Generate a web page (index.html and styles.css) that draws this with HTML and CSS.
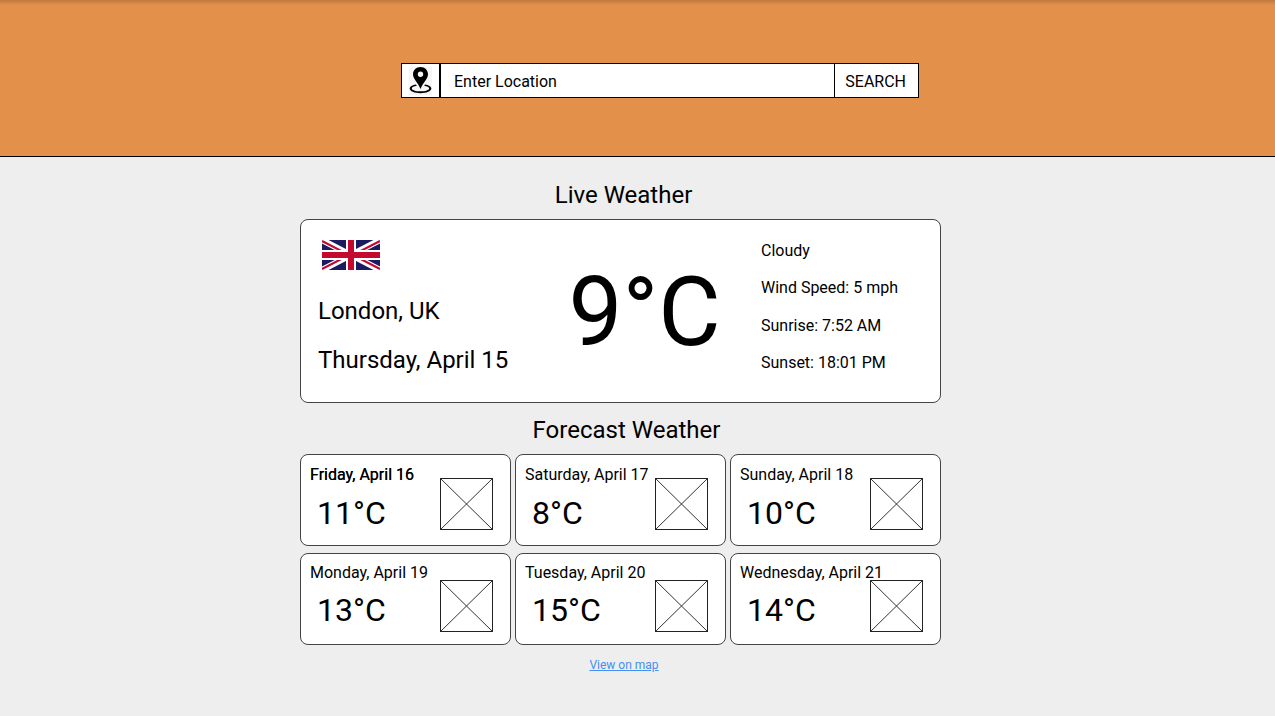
FILE: index.html
```html
<!DOCTYPE html>
<html lang="en">
<head>
<meta charset="utf-8">
<meta name="viewport" content="width=device-width, initial-scale=1">
<title>Weather</title>
<link rel="stylesheet" href="styles.css">
</head>
<body>
<header class="header">
  <form class="search" role="search">
    <label class="search-pin" for="location" aria-label="Location">
      <svg class="pin" viewBox="0 0 23 28" aria-hidden="true">
        <path d="M0 0H23V28H0Z" fill="#f6f6f6"/>
        <path d="M7 17.500C3.500 18 .7 19.600.7 21.600c0 2.700 4.800 4.700 10.800 4.700s10.800-2 10.800-4.700c0-2-2.800-3.600-6.300-4.100l-.8 1.200c2.900.4 5 1.500 5 2.700 0 1.600-3.900 2.900-8.700 2.900s-8.700-1.300-8.700-2.900c0-1.200 2.100-2.300 5-2.700Z"/>
        <path fill-rule="evenodd" d="M11.500 0C7.200 0 4 3.200 4 7.200c0 5 5 8 7.500 14.800 2.500-6.800 7.500-9.800 7.500-14.800C19 3.200 15.800 0 11.500 0Zm0 4.500a2.700 2.700 0 1 1 0 5.400 2.700 2.700 0 0 1 0-5.400Z"/>
      </svg>
    </label>
    <input class="search-input" id="location" type="text" placeholder="Enter Location">
    <button class="search-button" type="submit">SEARCH</button>
  </form>
</header>
<main class="main">
  <h1 class="heading heading-live">Live Weather</h1>
  <section class="card live">
    <div class="place">
      <svg class="flag" viewBox="0 0 58 30" preserveAspectRatio="none" role="img" aria-label="United Kingdom">
        <path d="M0 0H58V30H0Z" fill="#1b1b61"/>
        <path d="M0 0L58 30M58 0L0 30" stroke="#fff" stroke-width="6"/>
        <path d="M0 1L29 16M58 29L29 14M58 1L29 16M0 29L29 14" stroke="#c3092f" stroke-width="2"/>
        <path d="M29 0V30M0 15H58" stroke="#fff" stroke-width="10"/>
        <path d="M29 0V30M0 15H58" stroke="#c3092f" stroke-width="6"/>
      </svg>
      <p class="place-line">London, UK</p>
      <p class="place-line">Thursday, April 15</p>
    </div>
    <p class="now">9°C</p>
    <ul class="details">
      <li>Cloudy</li>
      <li>Wind Speed: 5 mph</li>
      <li>Sunrise: 7:52 AM</li>
      <li>Sunset: 18:01 PM</li>
    </ul>
  </section>
  <h2 class="heading heading-forecast">Forecast Weather</h2>
  <section class="forecast">
    <article class="card day">
      <h3 class="date date-next">Friday, April 16</h3>
      <p class="temp">11°C</p>
      <svg class="picture" viewBox="0 0 53 52" aria-hidden="true"><path class="diagonals" d="M0 0L53 52M53 0L0 52"/><path class="frame" d="M.5 .5H52.500V51.500H.5Z"/></svg>
    </article>
    <article class="card day">
      <h3 class="date">Saturday, April 17</h3>
      <p class="temp">8°C</p>
      <svg class="picture" viewBox="0 0 53 52" aria-hidden="true"><path class="diagonals" d="M0 0L53 52M53 0L0 52"/><path class="frame" d="M.5 .5H52.500V51.500H.5Z"/></svg>
    </article>
    <article class="card day">
      <h3 class="date">Sunday, April 18</h3>
      <p class="temp">10°C</p>
      <svg class="picture" viewBox="0 0 53 52" aria-hidden="true"><path class="diagonals" d="M0 0L53 52M53 0L0 52"/><path class="frame" d="M.5 .5H52.500V51.500H.5Z"/></svg>
    </article>
    <article class="card day day-late">
      <h3 class="date">Monday, April 19</h3>
      <p class="temp">13°C</p>
      <svg class="picture" viewBox="0 0 53 52" aria-hidden="true"><path class="diagonals" d="M0 0L53 52M53 0L0 52"/><path class="frame" d="M.5 .5H52.500V51.500H.5Z"/></svg>
    </article>
    <article class="card day day-late">
      <h3 class="date">Tuesday, April 20</h3>
      <p class="temp">15°C</p>
      <svg class="picture" viewBox="0 0 53 52" aria-hidden="true"><path class="diagonals" d="M0 0L53 52M53 0L0 52"/><path class="frame" d="M.5 .5H52.500V51.500H.5Z"/></svg>
    </article>
    <article class="card day day-late">
      <h3 class="date">Wednesday, April 21</h3>
      <p class="temp">14°C</p>
      <svg class="picture" viewBox="0 0 53 52" aria-hidden="true"><path class="diagonals" d="M0 0L53 52M53 0L0 52"/><path class="frame" d="M.5 .5H52.500V51.500H.5Z"/></svg>
    </article>
  </section>
  <a class="map-link" href="#map">View on map</a>
</main>
</body>
</html>
```
FILE: styles.css
```css
* {
  box-sizing: border-box;
}

body {
  margin: 0;
  background: #eee;
  color: #000;
  font-family: Roboto, "Liberation Sans", sans-serif;
  font-size: 16px;
  line-height: 20px;
}

h1, h2, h3, p, ul {
  margin: 0;
  padding: 0;
  font-weight: 400;
}

/* Header and search */
.header {
  display: flex;
  justify-content: center;
  padding: 63px 0 58px 45px;
  border-bottom: 1px solid #000;
  background: linear-gradient(#c07a3e, #e2904a 5px);
}

.search {
  display: flex;
  width: 100%;
  max-width: 518px;
  border: 1px solid #000;
  background: #fff;
}

.search-pin {
  display: flex;
  align-items: center;
  padding: 0 7px;
}

.pin {
  width: 23px;
  height: 28px;
}

.search-input {
  flex: 1;
  min-width: 0;
  padding: 7px 13px 5px;
  border: solid #000;
  border-width: 0 1px 0 2px;
  background: #fff;
  color: #000;
  font: inherit;
  line-height: 21px;
}

.search-input::placeholder {
  color: #000;
  opacity: 1;
}

.search-button {
  padding: 2px 12px 0 10px;
  border: 0;
  background: #fff;
  color: #000;
  font: inherit;
}

/* Content column */
.main {
  display: flex;
  flex-direction: column;
  max-width: 675px;
  margin: 0 auto;
  padding: 24px 34px 24px 0;
}

.heading {
  font-size: 24px;
  line-height: 28px;
  text-align: center;
}

.heading-live {
  padding: 0 0 10px 6px;
}

.heading-forecast {
  padding: 13px 0 10px 12px;
}

.card {
  border: 1px solid #444;
  border-radius: 8px;
  background: #fff;
}

/* Current conditions */
.live {
  display: flex;
  justify-content: space-between;
  padding: 20px 42px 28px 17px;
}

.place {
  display: flex;
  flex-direction: column;
  gap: 21px;
}

.flag {
  width: 58px;
  height: 30px;
  margin: 0 0 6px 4px;
}

.place-line {
  font-size: 24px;
  line-height: 28px;
}

.now {
  padding: 16px 0 0 20px;
  font-size: 96px;
  line-height: 112px;
}

.details {
  display: flex;
  flex-direction: column;
  justify-content: space-between;
  height: 133px;
  padding-top: 1px;
  list-style: none;
}

/* Forecast */
.forecast {
  display: grid;
  grid-template-columns: repeat(3, 1fr);
  gap: 7px 4px;
}

.day {
  display: grid;
  grid-template-columns: 1fr 53px;
  grid-template-rows: 20px 1fr;
  height: 92px;
  padding: 10px 17px 0 9px;
}

.day-late {
  padding-top: 9px;
}

.date {
  grid-area: 1 / 1 / 2 / 3;
  font-size: 16px;
  line-height: 20px;
}

.date-next {
  text-shadow: 0 0 0 #000;
}

.temp {
  grid-area: 2 / 1;
  padding: 9px 0 0 7px;
  font-size: 32px;
  line-height: 38px;
}

.day-late .temp {
  padding-top: 8px;
}

.picture {
  grid-area: 1 / 2 / 3 / 3;
  width: 53px;
  height: 52px;
  margin-top: 13px;
}

.day-late .picture {
  margin-top: 17px;
}

.diagonals {
  stroke: #333;
  stroke-width: 1;
}

.frame {
  fill: none;
  stroke: #222;
}

.map-link {
  align-self: center;
  margin: 10px 0 0 7px;
  color: #438ff5;
  font-size: 12px;
  line-height: 21px;
}
```
